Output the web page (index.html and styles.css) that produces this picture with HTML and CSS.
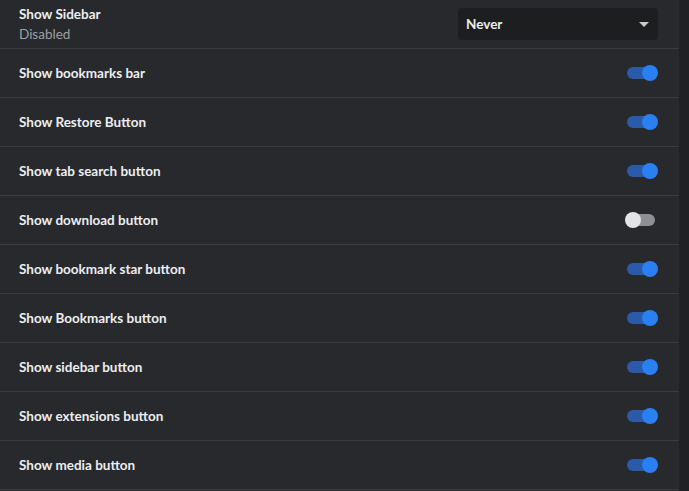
FILE: index.html
```html
<!DOCTYPE html>
<html>
<head>
<meta charset="utf-8">
<link rel="stylesheet" href="styles.css">
</head>
<body>
<div class="page">
  <div class="list">
    <div class="row row-first">
      <div class="label">
        <div class="title">Show Sidebar</div>
        <div class="sub">Disabled</div>
      </div>
      <div class="select">
        <span>Never</span>
        <span class="caret"></span>
      </div>
    </div>
    <div class="row"><div class="title">Show bookmarks bar</div><div class="toggle on"><span class="knob"></span></div></div>
    <div class="row"><div class="title">Show Restore Button</div><div class="toggle on"><span class="knob"></span></div></div>
    <div class="row"><div class="title">Show tab search button</div><div class="toggle on"><span class="knob"></span></div></div>
    <div class="row"><div class="title">Show download button</div><div class="toggle"><span class="knob"></span></div></div>
    <div class="row"><div class="title">Show bookmark star button</div><div class="toggle on"><span class="knob"></span></div></div>
    <div class="row"><div class="title">Show Bookmarks button</div><div class="toggle on"><span class="knob"></span></div></div>
    <div class="row"><div class="title">Show sidebar button</div><div class="toggle on"><span class="knob"></span></div></div>
    <div class="row"><div class="title">Show extensions button</div><div class="toggle on"><span class="knob"></span></div></div>
    <div class="row"><div class="title">Show media button</div><div class="toggle on"><span class="knob"></span></div></div>
  </div>
  <div class="strip"></div>
</div>
</body>
</html>
```
FILE: styles.css
```css
html, body {
  margin: 0;
  padding: 0;
  background: #28292c;
  height: 100%;
  overflow: hidden;
}
.page {
  display: flex;
  height: 491px;
  font-family: "Lato", "Noto Sans", sans-serif;
}
.list {
  width: 679px;
  flex: none;
  background: #28292c;
}
.strip {
  flex: 1;
  background: #202124;
}
.row {
  height: 48px;
  border-bottom: 1px solid #3b3c40;
  display: flex;
  align-items: center;
  justify-content: space-between;
  padding: 0 21px 0 19px;
  box-sizing: content-box;
}
.row-first {
  align-items: flex-start;
}
.title {
  color: #eceef1;
  font-size: 13.5px;
  font-weight: 700;
  letter-spacing: 0;
}
.row-first .label {
  display: flex;
  flex-direction: column;
  gap: 4px;
  padding-top: 6px;
}
.sub {
  color: #9aa0a6;
  font-size: 13.5px;
  font-weight: 400;
}
.select {
  width: 200px;
  height: 32px;
  box-sizing: border-box;
  background: #1d1e20;
  border-radius: 4px;
  display: flex;
  align-items: center;
  justify-content: space-between;
  padding: 0 9px 0 8px;
  color: #eceef1;
  font-size: 13.5px;
  font-weight: 700;
  margin-top: 8px;
}
.caret {
  width: 0;
  height: 0;
  border-left: 5px solid transparent;
  border-right: 5px solid transparent;
  border-top: 5px solid #c8cacd;
}
.toggle {
  position: relative;
  width: 28px;
  height: 12px;
  border-radius: 6px;
  background: #8d8f94;
  margin-right: 3px;
}
.toggle.on {
  background: #2b5aa8;
}
.knob {
  position: absolute;
  top: -2px;
  left: -2px;
  width: 16px;
  height: 16px;
  border-radius: 50%;
  background: #e3e4e7;
}
.toggle.on .knob {
  left: auto;
  right: -3px;
  background: #2a7ff2;
}
```
